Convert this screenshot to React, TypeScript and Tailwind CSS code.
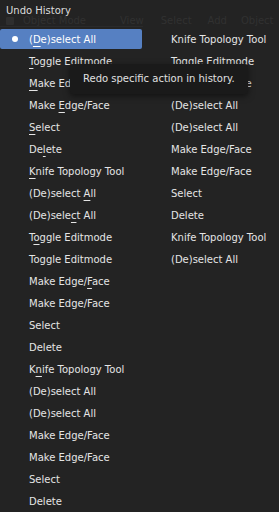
import React from "react";

type Item = { label: string; key?: number };

// key = index of the accelerator letter that gets underlined
const left: Item[] = [
  { label: "(De)select All", key: 1 },
  { label: "Toggle Editmode", key: 0 },
  { label: "Make Edge/Face", key: 0 },
  { label: "Make Edge/Face", key: 5 },
  { label: "Select", key: 0 },
  { label: "Delete", key: 2 },
  { label: "Knife Topology Tool", key: 0 },
  { label: "(De)select All", key: 11 },
  { label: "(De)select All", key: 8 },
  { label: "Toggle Editmode", key: 1 },
  { label: "Toggle Editmode" },
  { label: "Make Edge/Face", key: 10 },
  { label: "Make Edge/Face" },
  { label: "Select" },
  { label: "Delete" },
  { label: "Knife Topology Tool", key: 1 },
  { label: "(De)select All" },
  { label: "(De)select All" },
  { label: "Make Edge/Face" },
  { label: "Make Edge/Face" },
  { label: "Select" },
  { label: "Delete" },
];

const right: Item[] = [
  { label: "Knife Topology Tool" },
  { label: "Toggle Editmode" },
  { label: "Make Edge/Face" },
  { label: "(De)select All" },
  { label: "(De)select All" },
  { label: "Make Edge/Face" },
  { label: "Make Edge/Face" },
  { label: "Select" },
  { label: "Delete" },
  { label: "Knife Topology Tool" },
  { label: "(De)select All" },
];

function Label({ item }: { item: Item }) {
  if (item.key === undefined) return <>{item.label}</>;
  const k = item.key;
  return (
    <>
      {item.label.slice(0, k)}
      <span className="underline underline-offset-[3px] decoration-1">{item.label[k]}</span>
      {item.label.slice(k + 1)}
    </>
  );
}

function Row({ item, active }: { item: Item; active?: boolean }) {
  return (
    <div className="h-[22px] flex items-center">
      <div
        className={`h-[20px] w-full flex items-center rounded-[2px] ${
          active ? "bg-[#5680c2] text-white" : "text-[#e5e5e5]"
        }`}
      >
        <div className="w-[29px] shrink-0 flex justify-center pl-[1px]">
          {active && <div className="w-[6px] h-[6px] rounded-full bg-white" />}
        </div>
        <span className="whitespace-nowrap pt-[2px]">
          <Label item={item} />
        </span>
      </div>
    </div>
  );
}

export default function App() {
  return (
    <div className="relative w-[279px] h-[512px] overflow-hidden bg-[#232323] text-[10px] leading-[12px] font-['DejaVu_Sans',sans-serif]">
      {/* faint blender header showing through the menu */}
      <div className="absolute left-0 top-[15px] w-[279px] flex items-center pl-[6px] text-[#313131] whitespace-nowrap">
        <div className="w-[8px] h-[8px] bg-[#2e2e2e] rounded-[1px]" />
        <span className="ml-[9px]">Object Mode</span>
        <span className="ml-[34px]">View</span>
        <span className="ml-[17px]">Select</span>
        <span className="ml-[16px]">Add</span>
        <span className="ml-[14px]">Object</span>
      </div>
      <div className="absolute left-0 top-[26px] w-[143px] h-px bg-[#2a2a2a]" />

      <div className="relative">
        <div className="h-[28px] pl-[6px] pt-[5px] text-[#dcdcdc]">Undo History</div>
        <div className="flex">
          <div className="w-[142px] shrink-0">
            {left.map((it, i) => (
              <Row key={i} item={it} active={i === 0} />
            ))}
          </div>
          <div className="w-[142px] shrink-0">
            {right.map((it, i) => (
              <Row key={i} item={it} />
            ))}
          </div>
        </div>
      </div>

      {/* tooltip */}
      <div className="absolute left-[70px] top-[64px] w-[178px] h-[30px] bg-[#1a1a1a] rounded-[3px] shadow-[0_2px_6px_rgba(0,0,0,0.5)] flex items-center pl-[13px] text-[#e0e0e0] whitespace-nowrap">
        Redo specific action in history.
      </div>
    </div>
  );
}
